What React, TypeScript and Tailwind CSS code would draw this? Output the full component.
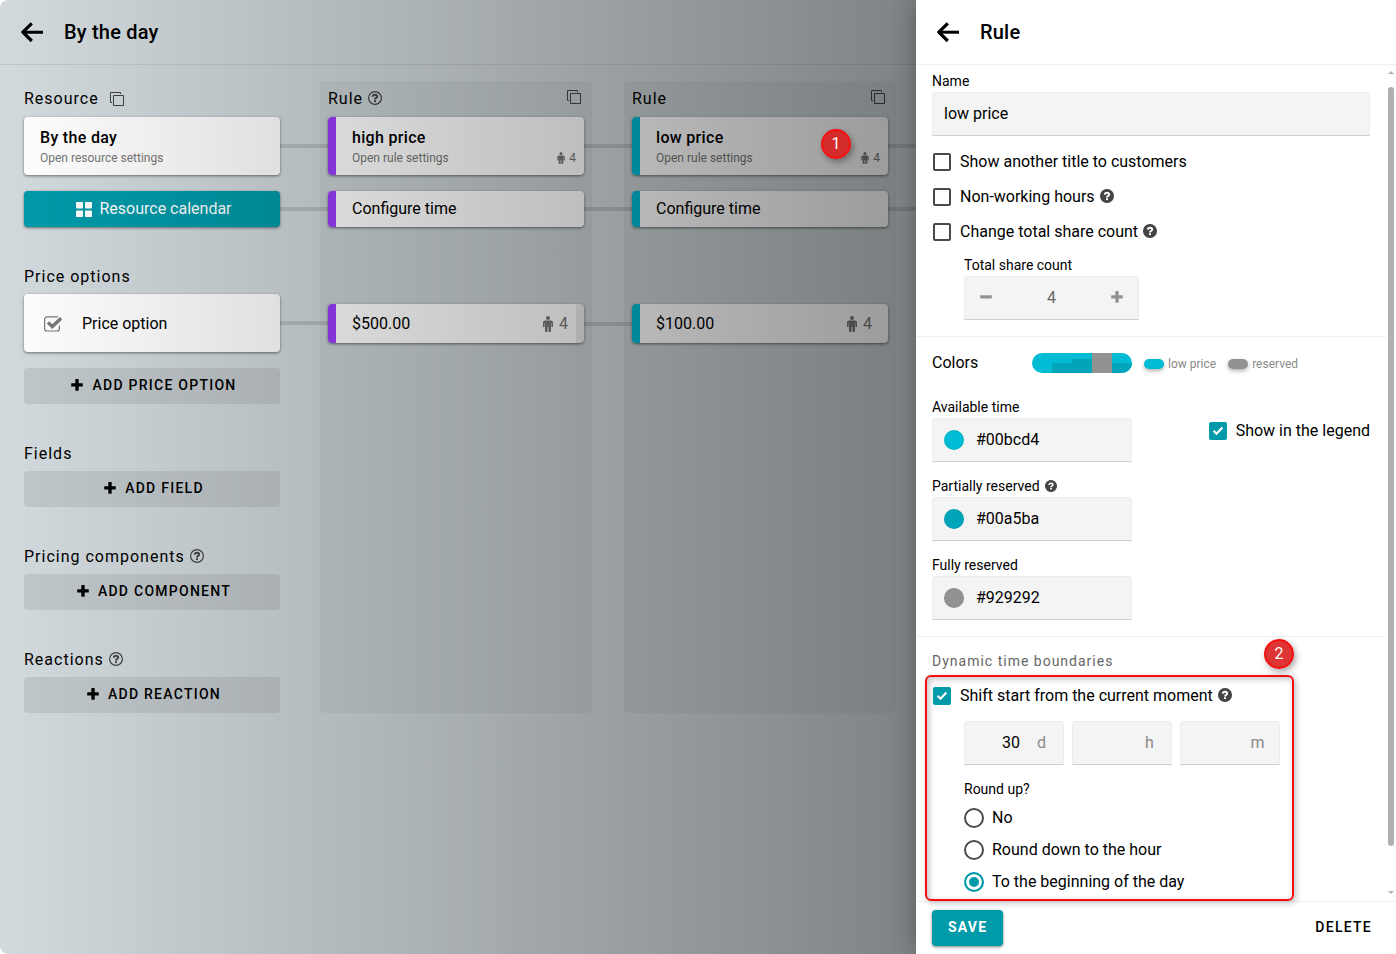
import React, { useState } from "react";
import { clsx } from "clsx";

const addSections = [
  { title: "Fields", button: "Add field", help: false },
  { title: "Pricing components", button: "Add component", help: true },
  { title: "Reactions", button: "Add reaction", help: true },
];

const rules = [
  {
    id: "high",
    name: "high price",
    price: "$500.00",
    stripe: "bg-[#983dfb]",
    help: true,
    last: false,
  },
  {
    id: "low",
    name: "low price",
    price: "$100.00",
    stripe: "bg-[#00bcd4]",
    help: false,
    last: true,
  },
];

const CARD =
  "relative flex w-full overflow-visible rounded bg-white text-left shadow-[0_1px_3px_rgba(0,0,0,0.5)]";

function ArrowIcon() {
  return (
    <svg viewBox="0 0 24 24" className="size-6" fill="none" stroke="#000">
      <path d="M11.8 3.4 2.8 12.2l9 8.8" strokeWidth="3.2" strokeLinejoin="round" />
      <path d="M3 12.2h20" strokeWidth="3" />
    </svg>
  );
}

function CopyIcon() {
  return (
    <svg
      viewBox="0 0 16 16"
      className="size-4"
      fill="none"
      stroke="#444"
      strokeLinejoin="round"
    >
      <path d="M3 11.5H1.5v-10h10V3" />
      <rect x="4.5" y="4.5" width="10" height="10" />
    </svg>
  );
}

function HelpIcon({ filled, className }: { filled?: boolean; className?: string }) {
  return (
    <svg viewBox="0 0 14 14" className={clsx("shrink-0", className)} fill="none">
      <circle
        cx="7"
        cy="7"
        r="6.4"
        stroke="#444"
        strokeWidth="1.2"
        fill={filled ? "#444" : "none"}
      />
      <path
        d="M4.7 5.6C4.9 4.4 5.8 3.8 7 3.8c1.3 0 2.2.7 2.2 1.700 0 1.400-2.200 1.300-2.200 2.900"
        stroke={filled ? "#fff" : "#444"}
        strokeWidth="1.9"
      />
      <rect x="6" y="9.2" width="2" height="1.9" fill={filled ? "#fff" : "#444"} />
    </svg>
  );
}

function PlusIcon() {
  return (
    <svg viewBox="0 0 12 12" className="size-3" fill="currentColor">
      <rect x="0.2" y="4.2" width="11.6" height="3.4" rx="0.6" />
      <rect x="4.3" y="0.1" width="3.4" height="11.6" rx="0.6" />
    </svg>
  );
}

function MinusIcon() {
  return (
    <svg viewBox="0 0 12 12" className="size-3" fill="currentColor">
      <rect x="0.2" y="4.2" width="11.6" height="3.4" rx="0.6" />
    </svg>
  );
}

function PersonIcon({ className }: { className?: string }) {
  return (
    <svg viewBox="0 0 10 16" className={className} fill="currentColor">
      <circle cx="5" cy="2" r="2" />
      <path d="M2 4.5h6a2 2 0 0 1 2 2v4a.8.8 0 0 1-1.6 0V7H8v8.2a.8.8 0 0 1-.8.8h-.9a.8.8 0 0 1-.8-.8v-4.4h-1v4.4a.8.8 0 0 1-.8.8h-.9a.8.8 0 0 1-.8-.8V7h-.4v3.5a.8.8 0 0 1-1.6 0v-4a2 2 0 0 1 2-2Z" />
    </svg>
  );
}

function GridIcon() {
  return (
    <svg viewBox="0 0 16 15" className="h-[15px] w-4" fill="currentColor">
      <rect x="0" y="0" width="7" height="6.6" rx="0.8" />
      <rect x="9" y="0" width="7" height="6.6" rx="0.8" />
      <rect x="0" y="8.4" width="7" height="6.6" rx="0.8" />
      <rect x="9" y="8.4" width="7" height="6.6" rx="0.8" />
    </svg>
  );
}

function CheckSquareIcon() {
  return (
    <svg viewBox="0 0 18 16" className="h-4 w-[18px]" fill="none" stroke="#777">
      <path
        d="M14 .8H3.2A2.6 2.6 0 0 0 .6 3.4v9A2.6 2.6 0 0 0 3.2 15h9.6a2.6 2.6 0 0 0 2.6-2.6V9.6"
        strokeWidth="1.2"
      />
      <path d="m4 6.4 4.3 4.2 8.8-8.3" strokeWidth="3.4" />
    </svg>
  );
}

function Connector() {
  return (
    <span className="absolute top-1/2 left-full -mt-[2px] h-1 w-12 bg-black/12" />
  );
}

function Checkbox({
  label,
  help,
  checked,
}: {
  label: string;
  help?: boolean;
  checked?: boolean;
}) {
  return (
    <label className="flex h-[35px] items-center gap-2">
      <span className="relative flex p-px">
        <input
          type="checkbox"
          defaultChecked={checked}
          className="peer size-[18px] appearance-none rounded-xs border-2 border-[#4a4a4a] checked:border-[#009aa9] checked:bg-[#009aa9]"
        />
        <svg
          viewBox="0 0 20 20"
          className="pointer-events-none absolute inset-0 hidden size-5 peer-checked:block"
          fill="none"
          stroke="#fff"
          strokeWidth="2.2"
        >
          <path d="m5.6 9.8 2.9 2.9 5.9-6.3" />
        </svg>
      </span>
      <span className="flex items-center gap-[5px]">
        {label}
        {help && <HelpIcon filled className="mb-0.5 size-3.5" />}
      </span>
    </label>
  );
}

function ColorField({
  id,
  label,
  value,
  help,
}: {
  id: string;
  label: string;
  value: string;
  help?: boolean;
}) {
  return (
    <div className="w-[200px]">
      <label htmlFor={id} className="flex items-center gap-[5px] text-sm leading-[22px]">
        {label}
        {help && <HelpIcon filled className="size-3" />}
      </label>
      <div className="flex h-11 items-center gap-3 rounded-t border border-[#ebebeb] border-b-[#cfcfcf] bg-[#f4f4f4] pl-[11px]">
        <span
          className="size-5 shrink-0 rounded-full shadow-[inset_0_0_0_1px_rgba(0,0,0,0.06)]"
          style={{ backgroundColor: value }}
        />
        <input id={id} defaultValue={value} className="w-full min-w-0 bg-transparent outline-none" />
      </div>
    </div>
  );
}

function DurationField({ unit, name, value }: { unit: string; name: string; value?: string }) {
  return (
    <label className="flex h-11 w-[100px] items-center rounded-t border border-[#ebebeb] border-b-[#cfcfcf] bg-[#f4f4f4]">
      <input
        aria-label={name}
        defaultValue={value}
        className="w-full min-w-0 bg-transparent text-right outline-none"
      />
      <span className="w-[43px] shrink-0 text-center text-[#8a8a8a]">{unit}</span>
    </label>
  );
}

function Badge({ children, className }: { children: React.ReactNode; className: string }) {
  return (
    <span
      className={clsx(
        "absolute z-20 flex size-[30px] items-center justify-center rounded-full border-2 border-[#f50f0f] bg-[#dc1e1e]/90 text-white shadow-[2px_3px_6px_rgba(0,0,0,0.35)]",
        className,
      )}
    >
      {children}
    </span>
  );
}

function AddButton({ children, className }: { children: React.ReactNode; className?: string }) {
  return (
    <button
      className={clsx(
        "flex h-9 w-full items-center justify-center gap-[9px] rounded bg-black/8 pb-0.5 pl-1 text-sm font-medium tracking-[0.09em] uppercase",
        className,
      )}
    >
      <PlusIcon />
      {children}
    </button>
  );
}

function ResourceColumn() {
  return (
    <div className="w-64 shrink-0">
      <div className="flex h-9 items-center gap-2.5">
        <h2 className="tracking-[1px]">Resource</h2>
        <button aria-label="Copy resource">
          <CopyIcon />
        </button>
      </div>
      <button className={clsx(CARD, "flex-col px-4 py-2")}>
        <span className="pt-px leading-[23px] font-medium tracking-[0.02em]">By the day</span>
        <span className="text-xs leading-[18px] text-[#777]">Open resource settings</span>
        <Connector />
      </button>
      <button className="relative mt-4 flex h-9 w-full items-center justify-center gap-[7px] rounded bg-[#009aa9] pl-1 text-white shadow-[0_1px_3px_rgba(0,0,0,0.5)]">
        <GridIcon />
        Resource calendar
        <Connector />
      </button>

      <h2 className="mt-[31px] h-9 pt-px leading-9 tracking-[1px]">Price options</h2>
      <button className={clsx(CARD, "h-[58px] items-center gap-5 pt-px pl-5")}>
        <CheckSquareIcon />
        Price option
        <Connector />
      </button>
      <AddButton className="mt-4">Add price option</AddButton>

      {addSections.map((s) => (
        <section key={s.title} className="mt-[31px]">
          <div className="flex h-9 items-center gap-[5px] pt-0.5">
            <h2 className="tracking-[1px]">{s.title}</h2>
            {s.help && <HelpIcon className="mb-0.5 size-3.5" />}
          </div>
          <AddButton>{s.button}</AddButton>
        </section>
      ))}
    </div>
  );
}

function RuleColumn({ rule }: { rule: (typeof rules)[number] }) {
  return (
    <div className="w-[272px] shrink-0 rounded bg-black/4 px-2">
      <div className="flex h-9 items-center gap-[5px]">
        <h2 className="tracking-[1px]">Rule</h2>
        {rule.help && <HelpIcon className="mb-0.5 size-3.5" />}
        <button aria-label={`Copy ${rule.name}`} className="mr-0.5 mb-1 ml-auto">
          <CopyIcon />
        </button>
      </div>
      <button className={CARD}>
        <span className={clsx("w-2 rounded-l", rule.stripe)} />
        <span className="flex flex-1 flex-col py-2 pr-2 pl-4">
          <span className="pt-px leading-[23px] font-medium tracking-[0.02em]">{rule.name}</span>
          <span className="flex items-center text-xs leading-[18px] text-[#777]">
            Open rule settings
            <PersonIcon className="mr-1 ml-auto h-3 w-2" />4
          </span>
        </span>
        <Connector />
        {rule.last && <Badge className="top-3 right-[37px]">1</Badge>}
      </button>
      <button className={clsx(CARD, "mt-4 h-9")}>
        <span className={clsx("w-2 rounded-l", rule.stripe)} />
        <span className="pl-4 leading-9">Configure time</span>
        <Connector />
      </button>
      <button className={clsx(CARD, "mt-[77px] h-[39px]")}>
        <span className={clsx("w-2 rounded-l", rule.stripe)} />
        <span className="flex flex-1 items-center pl-4">
          {rule.price}
          <span className="ml-auto flex items-center gap-1.5 pr-2 text-[#777]">
            <PersonIcon className="h-4 w-2.5" />4
          </span>
        </span>
        <span className={clsx("w-2 rounded-r", !rule.last && "bg-black/8")} />
        {!rule.last && <Connector />}
      </button>
    </div>
  );
}

function Legend({ color, children }: { color: string; children: React.ReactNode }) {
  return (
    <span className="flex items-center gap-1 pt-0.5 text-xs text-[#8a8a8a]">
      <span
        className={clsx("h-2.5 w-5 rounded-full shadow-[0_2px_4px_rgba(0,0,0,0.3)]", color)}
      />
      {children}
    </span>
  );
}

function ShareCount() {
  const [count, setCount] = useState(4);

  return (
    <div className="mt-[5px] ml-8 w-[175px]">
      <label htmlFor="share-count" className="block text-sm leading-[22px]">
        Total share count
      </label>
      <div className="flex h-11 items-center rounded-t border border-[#ebebeb] border-b-[#cfcfcf] bg-[#f4f4f4] text-[#666]">
        <button
          type="button"
          aria-label="Decrease"
          onClick={() => setCount(count - 1)}
          className="flex size-[42px] shrink-0 items-center justify-center pb-0.5 text-[#929292]"
        >
          <MinusIcon />
        </button>
        <input
          id="share-count"
          value={count}
          onChange={(e) => setCount(Number(e.target.value) || 0)}
          className="w-full min-w-0 bg-transparent text-center outline-none"
        />
        <button
          type="button"
          aria-label="Increase"
          onClick={() => setCount(count + 1)}
          className="flex size-[42px] shrink-0 items-center justify-center pb-0.5 text-[#929292]"
        >
          <PlusIcon />
        </button>
      </div>
    </div>
  );
}

function Scrollbar() {
  return (
    <div className="flex w-2.5 shrink-0 flex-col items-center" aria-hidden="true">
      <svg viewBox="0 0 6 22" className="h-[22px] w-1.5" fill="#b0b0b0">
        <path d="M3 6 6 9H0Z" />
      </svg>
      <div className="flex-1">
        <div className="h-[759px] w-1.5 rounded-full bg-[#b0b0b0]" />
      </div>
      <svg viewBox="0 0 6 22" className="h-[22px] w-1.5" fill="#b0b0b0">
        <path d="M0 12h6l-3 3Z" />
      </svg>
    </div>
  );
}

function RuleDrawer() {
  return (
    <aside className="relative z-10 flex w-[480px] shrink-0 flex-col bg-white shadow-[0_0_24px_rgba(0,0,0,0.3)]">
      <header className="flex h-[65px] items-center gap-5 border-b border-[#f0f0f0] pl-5">
        <button aria-label="Close rule">
          <ArrowIcon />
        </button>
        <h1 className="text-xl font-medium tracking-[0.01em]">Rule</h1>
      </header>

      <div className="flex flex-1">
        <form id="rule-form" className="flex-1 pt-[5px]">
          <section className="border-b border-[#f0f0f0] px-4 pb-4">
            <label htmlFor="rule-name" className="block text-sm leading-[22px]">
              Name
            </label>
            <input
              id="rule-name"
              defaultValue="low price"
              className="mb-2 block h-11 w-full rounded-t border border-[#ebebeb] border-b-[#cfcfcf] bg-[#f4f4f4] px-[11px] pb-0.5 outline-none"
            />
            <Checkbox label="Show another title to customers" />
            <Checkbox label="Non-working hours" help />
            <Checkbox label="Change total share count" help />
            <ShareCount />
          </section>

          <section className="border-b border-[#f0f0f0] p-4">
            <div className="flex h-5 items-center gap-3">
              <h2 className="w-[88px]">Colors</h2>
              <div className="flex h-5 w-[100px] items-end overflow-hidden rounded-full bg-[#00bcd4]">
                <span className="ml-5 h-2.5 w-5 bg-[#00a5ba]" />
                <span className="h-3.5 w-5 bg-[#00a5ba]" />
                <span className="h-5 w-5 bg-[#929292]" />
                <span className="h-2.5 w-5 bg-[#00a5ba]" />
              </div>
              <Legend color="bg-[#00bcd4]">low price</Legend>
              <Legend color="bg-[#929292]">reserved</Legend>
            </div>
            <div className="mt-[23px] flex items-start justify-between">
              <div className="flex flex-col gap-[13px]">
                <ColorField id="available" label="Available time" value="#00bcd4" />
                <ColorField id="partial" label="Partially reserved" value="#00a5ba" help />
                <ColorField id="full" label="Fully reserved" value="#929292" />
              </div>
              <div className="mt-[17px]">
                <Checkbox label="Show in the legend" checked />
              </div>
            </div>
          </section>

          <section className="relative px-4 pt-3 pb-px">
            <h2 className="text-sm leading-6 tracking-[1px] text-[#666]">
              Dynamic time boundaries
            </h2>
            <div className="pt-[5px]">
              <Checkbox label="Shift start from the current moment" help checked />
            </div>
            <div className="mt-2 ml-8 flex gap-2">
              <DurationField name="Days" unit="d" value="30" />
              <DurationField name="Hours" unit="h" />
              <DurationField name="Minutes" unit="m" />
            </div>
            <fieldset className="mt-[13px] ml-8">
              <legend className="mb-0.5 text-sm leading-[22px]">Round up?</legend>
              {["No", "Round down to the hour", "To the beginning of the day"].map((o, i) => (
                <label key={o} className="flex h-8 items-center gap-2">
                  <input
                    type="radio"
                    name="round"
                    defaultChecked={i === 2}
                    className="size-5 appearance-none rounded-full border-2 border-[#4a4a4a] checked:border-[#009aa9] checked:bg-[#009aa9] checked:shadow-[inset_0_0_0_3px_#fff]"
                  />
                  {o}
                </label>
              ))}
            </fieldset>
            {/* callout around the shift settings */}
            <div className="pointer-events-none absolute top-[38px] right-[92px] -bottom-0.5 left-[9px] rounded-md border-2 border-[#f50f0f] shadow-[2px_2px_6px_rgba(0,0,0,0.25),inset_2px_2px_6px_rgba(0,0,0,0.25)]" />
            <Badge className="top-0.5 right-[92px]">2</Badge>
          </section>
        </form>
        <Scrollbar />
      </div>

      <footer className="flex h-[53px] items-center justify-between border-t border-[#f0f0f0] px-4">
        <button
          type="submit"
          form="rule-form"
          className="h-9 rounded bg-[#009aa9] px-4 pb-0.5 text-sm font-bold tracking-[0.085em] text-white uppercase shadow-[0_1px_3px_rgba(0,0,0,0.5)]"
        >
          Save
        </button>
        <button className="h-9 px-2 pb-0.5 text-sm font-medium tracking-[0.09em] uppercase">
          Delete
        </button>
      </footer>
    </aside>
  );
}

export default function App() {
  return (
    <div className="flex min-h-screen overflow-hidden rounded-lg font-['Roboto',sans-serif] text-base text-black">
      <main className="relative min-w-0 flex-1 overflow-hidden bg-[#d2dadd]">
        <header className="flex h-[65px] items-center gap-5 border-b border-black/8 pl-5">
          <button aria-label="Back">
            <ArrowIcon />
          </button>
          <h1 className="text-xl font-medium tracking-[0.01em]">By the day</h1>
        </header>
        <div className="flex pt-4 pl-6">
          <div className="mr-10">
            <ResourceColumn />
          </div>
          <div className="flex gap-8">
            {rules.map((rule) => (
              <RuleColumn key={rule.id} rule={rule} />
            ))}
          </div>
        </div>
        <div className="pointer-events-none absolute inset-0 z-10 bg-linear-to-r from-black/0 to-black/40" />
      </main>
      <RuleDrawer />
    </div>
  );
}
